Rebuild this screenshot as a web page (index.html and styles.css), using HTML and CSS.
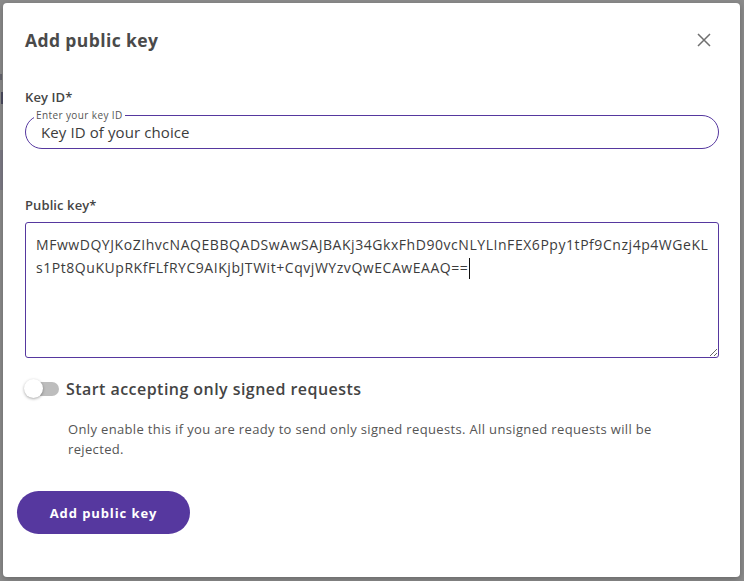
FILE: index.html
```html
<!DOCTYPE html>
<html lang="en">
<head>
<meta charset="utf-8">
<title>Add public key</title>
<link rel="stylesheet" href="styles.css">
</head>
<body>
<div class="backdrop">
  <div class="bg-page">
    <span class="bg-s"></span>
    <span class="bg-bar"></span>
    <span class="bg-band"></span>
  </div>
  <div class="dialog" role="dialog" aria-labelledby="dlg-title">
    <header class="dialog-header">
      <h2 id="dlg-title" class="dialog-title">Add public key</h2>
      <button class="close-btn" aria-label="Close">
        <svg width="14" height="14" viewBox="0 0 14 14"><path d="M1 1 L13 13 M13 1 L1 13" stroke="#6f6f6f" stroke-width="1.5" fill="none"/></svg>
      </button>
    </header>
    <div class="dialog-body">
      <div class="field">
        <label class="field-label">Key ID*</label>
        <fieldset class="outlined">
          <legend class="outlined-legend">Enter your key ID</legend>
          <div class="outlined-input">Key ID of your choice</div>
        </fieldset>
      </div>
      <div class="field field-key">
        <label class="field-label">Public key*</label>
        <div class="key-area">MFwwDQYJKoZIhvcNAQEBBQADSwAwSAJBAKj34GkxFhD90vcNLYLInFEX6Ppy1tPf9Cnzj4p4WGeKL<br>s1Pt8QuKUpRKfFLfRYC9AIKjbJTWit+CqvjWYzvQwECAwEAAQ==<span class="caret"></span></div>
      </div>
      <div class="toggle-row">
        <span class="switch"><span class="switch-thumb"></span></span>
        <span class="toggle-label">Start accepting only signed requests</span>
      </div>
      <p class="toggle-help">Only enable this if you are ready to send only signed requests. All unsigned requests will be rejected.</p>
    </div>
    <div class="dialog-actions">
      <button class="primary-btn">Add public key</button>
    </div>
  </div>
</div>
</body>
</html>
```
FILE: styles.css
```css
* { box-sizing: border-box; }
html, body { margin: 0; padding: 0; }
body {
  width: 744px;
  height: 581px;
  overflow: hidden;
  font-family: "Open Sans", "Noto Sans", sans-serif;
  color: #4a4a4a;
}
.backdrop {
  position: relative;
  width: 744px;
  height: 581px;
  background: #8b8b8b;
  padding: 3px 4px 4px 3px;
}
.bg-page {
  position: absolute;
  left: 0; top: 0;
  width: 3px; height: 581px;
}
.bg-s {
  position: absolute;
  left: 0; top: 74px;
  width: 2px; height: 6px;
  background: #66666f;
}
.bg-bar {
  position: absolute;
  left: 1px; top: 92px;
  width: 2px; height: 12px;
  background: #4c4c60;
}
.bg-band {
  position: absolute;
  left: 0; top: 150px;
  width: 3px; height: 40px;
  background: #7d7b86;
}
.dialog {
  position: relative;
  width: 737px;
  height: 574px;
  background: #ffffff;
  border-radius: 4px;
  box-shadow: 0 2px 6px rgba(0,0,0,0.25);
  display: flex;
  flex-direction: column;
}
.dialog-header {
  display: flex;
  align-items: center;
  justify-content: space-between;
  padding: 25px 29px 0 22px;
  height: 49px;
}
.dialog-title {
  margin: 0;
  font-size: 17.5px;
  line-height: 24px;
  font-weight: 700;
  color: #4a4a4a;
  letter-spacing: 0.4px;
}
.close-btn {
  border: 0;
  background: transparent;
  padding: 0;
  width: 14px;
  height: 14px;
  display: flex;
  cursor: pointer;
}
.dialog-body {
  padding: 36px 21px 0 22px;
}
.field { display: flex; flex-direction: column; }
.field-label {
  font-size: 13px;
  line-height: 18px;
  font-weight: 600;
  color: #454545;
  letter-spacing: 0.1px;
}
.outlined {
  margin: 3px 0 0 0;
  padding: 0 14px 0 8px;
  border: 1px solid #56389f;
  border-radius: 18px;
  min-width: 0;
}
.outlined-legend {
  font-size: 10px;
  line-height: 12px;
  padding: 0 2px;
  color: #555;
  letter-spacing: 0.4px;
}
.outlined-input {
  font-size: 15px;
  line-height: 20px;
  color: #3c3c3c;
  padding: 1px 0 6px 7px;
  letter-spacing: 0.1px;
}
.field-key { margin-top: 47px; }
.key-area {
  margin-top: 8px;
  height: 136px;
  border: 1px solid #56389f;
  border-radius: 3px;
  padding: 10px 10px 0 10px;
  font-size: 14px;
  line-height: 23px;
  letter-spacing: 0.55px;
  color: #3c3c3c;
  white-space: nowrap;
  overflow: hidden;
  resize: both;
}
.caret {
  display: inline-block;
  width: 1px;
  height: 21px;
  background: #111;
  vertical-align: -6px;
  margin-left: 1px;
}
.toggle-row {
  display: flex;
  align-items: center;
  margin-top: 19px;
  height: 24px;
}
.switch {
  position: relative;
  width: 34px;
  height: 14px;
  border-radius: 7px;
  background: #bdbdbd;
  flex: none;
}
.switch-thumb {
  position: absolute;
  left: -1px;
  top: -3px;
  width: 19px;
  height: 19px;
  border-radius: 50%;
  background: #fff;
  box-shadow: 0 1px 3px rgba(0,0,0,0.35);
}
.toggle-label {
  margin-left: 7px;
  font-size: 16px;
  font-weight: 600;
  color: #444;
  letter-spacing: 0.45px;
}
.toggle-help {
  margin: 18px 0 0 43px;
  font-size: 13px;
  line-height: 20px;
  color: #555;
  letter-spacing: 0.35px;
  max-width: 600px;
}
.dialog-actions {
  padding: 32px 14px 0 14px;
}
.primary-btn {
  width: 173px;
  height: 43px;
  border: 0;
  border-radius: 22px;
  background: #56389f;
  color: #fff;
  font-family: "Open Sans", "Noto Sans", sans-serif;
  font-size: 13px;
  font-weight: 700;
  letter-spacing: 0.9px;
  cursor: pointer;
}
```
